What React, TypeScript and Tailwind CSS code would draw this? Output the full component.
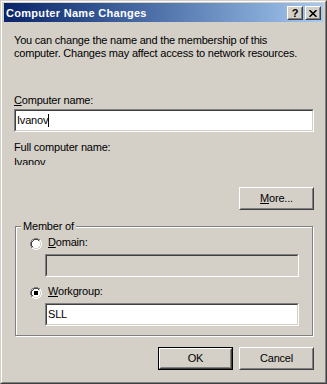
import React from 'react';

const Sunken: React.FC<{ className?: string; disabled?: boolean; children?: React.ReactNode }> = ({ className = '', disabled, children }) => (
  <div className={`border border-t-[#808080] border-l-[#808080] border-r-white border-b-white ${className}`}>
    <div
      className={`h-full border border-t-[#404040] border-l-[#404040] border-r-[#d4d0c8] border-b-[#d4d0c8] flex items-center pl-px ${
        disabled ? 'bg-[#d4d0c8]' : 'bg-white'
      }`}
    >
      {children}
    </div>
  </div>
);

const Raised: React.FC<{ className?: string; children?: React.ReactNode }> = ({ className = '', children }) => (
  <div className={`border border-t-white border-l-white border-r-[#404040] border-b-[#404040] ${className}`}>
    <div className="h-full border border-t-[#d4d0c8] border-l-[#d4d0c8] border-r-[#808080] border-b-[#808080] bg-[#d4d0c8] flex items-center justify-center">
      {children}
    </div>
  </div>
);

const Radio: React.FC<{ checked?: boolean }> = ({ checked }) => (
  <svg width="12" height="12" viewBox="0 0 12 12" shapeRendering="crispEdges" className="mt-[2px] shrink-0">
    <circle cx="6" cy="6" r="5.5" fill="none" stroke="#ffffff" />
    <path d="M2.11 9.89 A5.5 5.5 0 0 1 9.89 2.11" fill="none" stroke="#808080" />
    <circle cx="6" cy="6" r="4.5" fill="#ffffff" stroke="#d4d0c8" />
    <path d="M2.82 9.18 A4.5 4.5 0 0 1 9.18 2.82" fill="none" stroke="#404040" />
    {checked && <rect x="4" y="4" width="4" height="4" rx="1.2" fill="#000000" />}
  </svg>
);

const App: React.FC = () => {
  return (
    <div className="w-[327px] h-[384px] bg-[#d4d0c8] font-['Liberation_Sans',Arial,sans-serif] text-[11px] leading-[13px] tracking-[-0.2px] text-black">
      <div className="h-full border border-t-[#d4d0c8] border-l-[#d4d0c8] border-r-[#404040] border-b-[#404040]">
        <div className="h-full border border-t-white border-l-white border-r-[#808080] border-b-[#808080] pt-px px-[2px]">
          {/* Title bar */}
          <div className="h-[19px] flex items-start bg-gradient-to-r from-[#0a246a] to-[#a6caf0]">
            <div className="pt-[4px] pl-[2px] font-bold text-white tracking-[0.3px]">Computer Name Changes</div>
            <div className="ml-auto mr-[2px] mt-[3px] flex gap-[2px]">
              <Raised className="w-[16px] h-[14px]">
                <span className="font-bold text-[11px] leading-[11px] tracking-normal">?</span>
              </Raised>
              <Raised className="w-[16px] h-[14px]">
                <svg width="8" height="7" viewBox="0 0 8 7">
                  <path d="M0.5 0.2 L7.5 6.8 M7.5 0.2 L0.5 6.8" stroke="#000" strokeWidth="1.6" />
                </svg>
              </Raised>
            </div>
          </div>

          {/* Body */}
          <div className="pl-[10px] pr-[9px]">
            <p className="mt-[12px]">
              You can change the name and the membership of this
              <br />
              computer. Changes may affect access to network resources.
            </p>

            <div className="mt-[34px]">
              <span className="underline">C</span>omputer name:
            </div>
            <Sunken className="mt-[2px] h-[23px] w-full">
              <span>Ivanov</span>
              <span className="w-px h-[13px] bg-black" />
            </Sunken>

            <div className="mt-[9px]">Full computer name:</div>
            <div className="mt-[2px] h-[9px] overflow-hidden">Ivanov</div>

            <div className="mt-[22px] flex justify-end">
              <Raised className="w-[75px] h-[23px]">
                <span>
                  <span className="underline">M</span>ore...
                </span>
              </Raised>
            </div>

            {/* Member of group */}
            <div className="mt-[16px] ml-px w-[298px] h-[110px] relative border border-[#808080] shadow-[inset_1px_1px_0_#fff,1px_1px_0_#fff] pt-[9px] pl-[14px]">
              <div className="absolute left-[5px] -top-[7px] px-[2px] bg-[#d4d0c8]">Member of</div>

              <div className="flex h-[13px] gap-[6px]">
                <Radio />
                <span>
                  <span className="underline">D</span>omain:
                </span>
              </div>
              <Sunken disabled className="mt-[5px] ml-[15px] w-[254px] h-[23px]" />

              <div className="mt-[8px] flex h-[13px] gap-[6px]">
                <Radio checked />
                <span>
                  <span className="underline">W</span>orkgroup:
                </span>
              </div>
              <Sunken className="mt-[5px] ml-[15px] w-[254px] h-[23px]">
                <span>SLL</span>
              </Sunken>
            </div>

            <div className="mt-[11px] flex justify-end gap-[6px]">
              <div className="w-[75px] h-[23px] border border-black">
                <Raised className="h-full">
                  <span>OK</span>
                </Raised>
              </div>
              <Raised className="w-[75px] h-[23px]">
                <span>Cancel</span>
              </Raised>
            </div>
          </div>
        </div>
      </div>
    </div>
  );
};

export default App;
